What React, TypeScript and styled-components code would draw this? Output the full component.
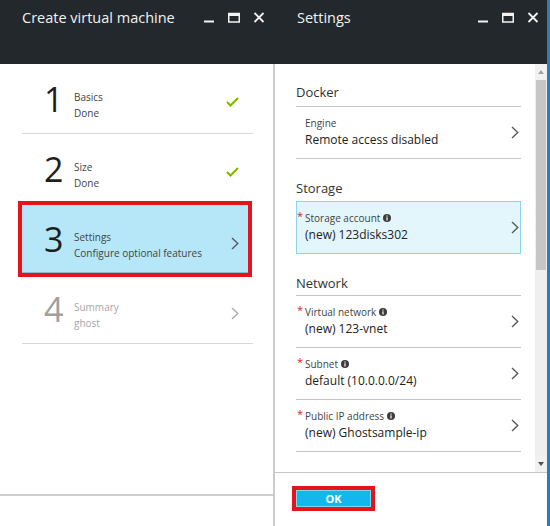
import React from 'react';
import styled, { createGlobalStyle, css } from 'styled-components';

const GlobalStyle = createGlobalStyle`
  html, body {
    margin: 0;
    padding: 0;
    background: #ffffff;
  }
  body {
    font-family: "Segoe UI", "Open Sans", "Liberation Sans", sans-serif;
  }
  * {
    box-sizing: border-box;
  }
`;

type StepState = 'done' | 'active' | 'todo';

type StepItem = {
  num: number;
  title: string;
  sub: string;
  state: StepState;
};

type FieldItem = {
  label: string;
  value: string;
  required?: boolean;
  info?: boolean;
  boxed?: boolean;
};

const steps: StepItem[] = [
  { num: 1, title: 'Basics', sub: 'Done', state: 'done' },
  { num: 2, title: 'Size', sub: 'Done', state: 'done' },
  { num: 3, title: 'Settings', sub: 'Configure optional features', state: 'active' },
  { num: 4, title: 'Summary', sub: 'ghost', state: 'todo' },
];

const networkFields: FieldItem[] = [
  { label: 'Virtual network', value: '(new) 123-vnet', required: true, info: true },
  { label: 'Subnet', value: 'default (10.0.0.0/24)', required: true, info: true },
  { label: 'Public IP address', value: '(new) Ghostsample-ip', required: true, info: true },
];

const MinimizeIcon = () => (
  <svg width="12" height="12" viewBox="0 0 12 12">
    <rect x="1" y="8.5" width="10" height="2" fill="#f2f2f2" />
  </svg>
);

const MaximizeIcon = () => (
  <svg width="12" height="12" viewBox="0 0 12 12">
    <rect x="0.75" y="1.5" width="10.5" height="8.5" fill="none" stroke="#f2f2f2" strokeWidth="1.5" />
    <rect x="0.75" y="1" width="10.5" height="3" fill="#f2f2f2" />
  </svg>
);

const CloseIcon = () => (
  <svg width="12" height="12" viewBox="0 0 12 12">
    <path d="M1.5 1 L10.5 10 M10.5 1 L1.5 10" stroke="#f2f2f2" strokeWidth="1.8" fill="none" />
  </svg>
);

const CheckIcon = () => (
  <svg width="13" height="10" viewBox="0 0 13 10">
    <path d="M1 5 L4.5 8.5 L12 1" stroke="#7cb800" strokeWidth="2" fill="none" />
  </svg>
);

const ChevronIcon = ({ color = '#555' }: { color?: string }) => (
  <svg width="8" height="13" viewBox="0 0 8 13">
    <path d="M1 1 L6.8 6.5 L1 12" stroke={color} strokeWidth="1.3" fill="none" />
  </svg>
);

const InfoIcon = () => (
  <svg width="8" height="8" viewBox="0 0 8 8">
    <circle cx="4" cy="4" r="4" fill="#3c3c3c" />
    <rect x="3.4" y="3.3" width="1.2" height="3.2" fill="#fff" />
    <rect x="3.4" y="1.5" width="1.2" height="1.1" fill="#fff" />
  </svg>
);

const Screen = styled.div`
  width: 550px;
  height: 526px;
  display: flex;
  overflow: hidden;
  background: #ffffff;
`;

const Blade = styled.section<{ $edge?: boolean }>`
  width: 275px;
  height: 100%;
  flex-shrink: 0;
  display: flex;
  flex-direction: column;
  ${(p) => p.$edge && css`
    border-right: 3px solid #2b7bbd;
  `}
`;

const BladeHeader = styled.header<{ $inset: number }>`
  height: 64px;
  flex-shrink: 0;
  display: flex;
  align-items: flex-start;
  padding: 7px ${(p) => p.$inset}px 0 22px;
  background: #23282c;
  color: #f2f2f2;
`;

const BladeTitle = styled.h1`
  flex: 1;
  margin: 0;
  font-size: 14.5px;
  font-weight: 400;
  line-height: 22px;
  white-space: nowrap;
`;

const WindowControls = styled.div`
  display: flex;
  gap: 13px;
  padding-top: 5px;
`;

const LeftBody = styled.div`
  flex: 1;
  display: flex;
  flex-direction: column;
  border-right: 2px solid #cbcbcb;
`;

const StepList = styled.div`
  flex: 1;
  display: flex;
  flex-direction: column;
  padding: 0 20px 0 22px;
`;

const Step = styled.div<{ $state: StepState }>`
  height: 70px;
  flex-shrink: 0;
  display: flex;
  align-items: flex-start;
  padding: 18px 14px 0 22px;
  border-bottom: 1px solid #d8d8d8;
  color: ${(p) => (p.$state === 'todo' ? '#a6a6a6' : '#444')};

  ${(p) => p.$state === 'active' && css`
    margin: 0 4px 0 -1px;
    padding-left: 23px;
    padding-right: 10px;
    background: #b5e7f8;
    border-bottom-color: transparent;
    box-shadow: inset 0 0 0 1px #8db7c4;
    outline: 4px solid #e3141c;
    outline-offset: -1px;
  `}
`;

const StepNumber = styled.span<{ $muted: boolean }>`
  width: 30px;
  font-size: 34px;
  line-height: 34px;
  font-weight: 400;
  color: ${(p) => (p.$muted ? '#a0a0a0' : '#1e1e1e')};
`;

const StepText = styled.div`
  flex: 1;
  display: flex;
  flex-direction: column;
  padding-top: 7px;
  font-size: 10px;
  line-height: 16px;
  white-space: nowrap;
`;

const StepIcon = styled.div`
  padding-top: 15px;
  display: flex;
`;

const LeftFooter = styled.div`
  height: 32px;
  flex-shrink: 0;
  border-top: 2px solid #cfcfcf;
`;

const RightBody = styled.div`
  flex: 1;
  display: flex;
  flex-direction: column;
  min-height: 0;
`;

const ScrollRegion = styled.div`
  flex: 1;
  display: flex;
  min-height: 0;
`;

const ScrollContent = styled.div`
  flex: 1;
  overflow: hidden;
  padding: 0 14px 0 21px;
`;

const SectionTitle = styled.h2<{ $plain?: boolean }>`
  margin: 0;
  padding: 19px 0 2px;
  font-size: 13px;
  font-weight: 400;
  line-height: 20px;
  color: #333;
  border-bottom: 1px solid ${(p) => (p.$plain ? 'transparent' : '#c4c4c4')};

  &:first-child {
    padding-top: 18px;
    padding-bottom: 4px;
  }
`;

const Field = styled.div<{ $boxed?: boolean }>`
  display: flex;
  align-items: center;
  padding: 8px 2px 9px 9px;
  border-bottom: 1px solid #c4c4c4;

  ${(p) => p.$boxed && css`
    border: 1px solid #8ed4ee;
    background: #e3f6fc;
    padding-left: 8px;
    padding-right: 1px;
  `}
`;

const FieldText = styled.div`
  flex: 1;
  display: flex;
  flex-direction: column;
  white-space: nowrap;
`;

const FieldLabel = styled.span`
  display: flex;
  align-items: center;
  gap: 3px;
  font-size: 10px;
  line-height: 16px;
  color: #444;
`;

const Required = styled.span`
  width: 8px;
  margin-left: -8px;
  margin-right: -3px;
  align-self: flex-start;
  font-size: 11px;
  line-height: 12px;
  color: #e0201b;
`;

const FieldValue = styled.span`
  font-size: 12px;
  line-height: 18px;
  color: #222;
`;

const Scrollbar = styled.div`
  width: 12px;
  flex-shrink: 0;
  display: flex;
  flex-direction: column;
  background: #efefef;
`;

const ScrollArrow = styled.div<{ $down?: boolean }>`
  height: 16px;
  flex-shrink: 0;
  display: flex;
  align-items: center;
  justify-content: center;
  background: #f1f1f1;

  &::after {
    content: '';
    border-left: 3px solid transparent;
    border-right: 3px solid transparent;
    ${(p) => (p.$down
      ? css`border-top: 4px solid #505050;`
      : css`border-bottom: 4px solid #a3a3a3;`)}
  }
`;

const ScrollThumb = styled.div`
  height: 190px;
  flex-shrink: 0;
  margin: 0 1px 0 1px;
  background: #c6c6c6;
`;

const ScrollTrack = styled.div`
  flex: 1;
`;

const RightFooter = styled.div`
  height: 54px;
  flex-shrink: 0;
  padding: 13px 0 0 17px;
  border-top: 1px solid #c6c6c6;
`;

const OkButton = styled.button`
  width: 83px;
  height: 25px;
  padding: 0;
  border: 4px solid #e3141c;
  background: #12b7ee;
  box-shadow: inset 0 0 0 1px #7fd6f3;
  color: #ffffff;
  font-family: inherit;
  font-size: 11px;
  font-weight: 700;
  line-height: 17px;
`;

const FieldRow = ({ item }: { item: FieldItem }) => (
  <Field $boxed={item.boxed}>
    <FieldText>
      <FieldLabel>
        {item.required && <Required>*</Required>}
        {item.label}
        {item.info && <InfoIcon />}
      </FieldLabel>
      <FieldValue>{item.value}</FieldValue>
    </FieldText>
    <ChevronIcon />
  </Field>
);

const App = () => {
  return (
    <>
      <GlobalStyle />
      <Screen>
        <Blade>
          <BladeHeader $inset={10}>
            <BladeTitle>Create virtual machine</BladeTitle>
            <WindowControls>
              <MinimizeIcon />
              <MaximizeIcon />
              <CloseIcon />
            </WindowControls>
          </BladeHeader>
          <LeftBody>
            <StepList>
              {steps.map((s) => (
                <Step key={s.num} $state={s.state}>
                  <StepNumber $muted={s.state === 'todo'}>{s.num}</StepNumber>
                  <StepText>
                    <span>{s.title}</span>
                    <span>{s.sub}</span>
                  </StepText>
                  <StepIcon>
                    {s.state === 'done' ? (
                      <CheckIcon />
                    ) : (
                      <ChevronIcon color={s.state === 'todo' ? '#a8a8a8' : '#555'} />
                    )}
                  </StepIcon>
                </Step>
              ))}
            </StepList>
            <LeftFooter />
          </LeftBody>
        </Blade>

        <Blade $edge>
          <BladeHeader $inset={8}>
            <BladeTitle>Settings</BladeTitle>
            <WindowControls>
              <MinimizeIcon />
              <MaximizeIcon />
              <CloseIcon />
            </WindowControls>
          </BladeHeader>
          <RightBody>
            <ScrollRegion>
              <ScrollContent>
                <SectionTitle>Docker</SectionTitle>
                <FieldRow item={{ label: 'Engine', value: 'Remote access disabled' }} />
                <SectionTitle $plain>Storage</SectionTitle>
                <FieldRow
                  item={{
                    label: 'Storage account',
                    value: '(new) 123disks302',
                    required: true,
                    info: true,
                    boxed: true,
                  }}
                />
                <SectionTitle>Network</SectionTitle>
                {networkFields.map((f) => (
                  <FieldRow key={f.label} item={f} />
                ))}
              </ScrollContent>
              <Scrollbar>
                <ScrollArrow />
                <ScrollThumb />
                <ScrollTrack />
                <ScrollArrow $down />
              </Scrollbar>
            </ScrollRegion>
            <RightFooter>
              <OkButton>OK</OkButton>
            </RightFooter>
          </RightBody>
        </Blade>
      </Screen>
    </>
  );
};

export default App;
